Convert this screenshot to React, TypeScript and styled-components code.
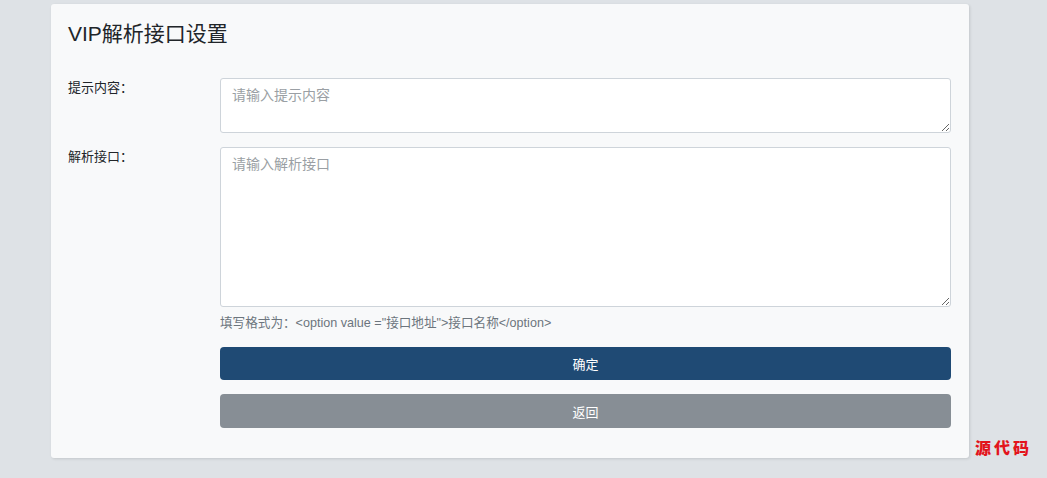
import React from "react";
import styled, { createGlobalStyle } from "styled-components";

const Global = createGlobalStyle`
  html, body { margin: 0; padding: 0; }
  body {
    background: #dee2e6;
    font-family: "Liberation Sans", "Noto Sans CJK SC", Arial, sans-serif;
    color: #212529;
    width: 1047px;
    height: 478px;
    overflow: hidden;
  }
`;

const Page = styled.div`
  position: relative;
  width: 1047px;
  height: 478px;
  padding-top: 4px;
  box-sizing: border-box;
`;

const Card = styled.div`
  margin-left: 51px;
  width: 918px;
  height: 454px;
  box-sizing: border-box;
  background: #f8f9fa;
  border-radius: 3px;
  box-shadow: 1px 1px 3px rgba(0, 0, 0, 0.12);
  padding: 15px 18px 30px 17px;
  display: flex;
  flex-direction: column;
`;

const Title = styled.h1`
  margin: 0 0 29px;
  font-size: 21px;
  line-height: 30px;
  font-weight: 400;
  color: #212529;
`;

const Row = styled.div<{ $gap?: number }>`
  display: grid;
  grid-template-columns: 152px 1fr;
  margin-bottom: ${(p) => p.$gap ?? 0}px;
`;

const Label = styled.label`
  font-size: 13px;
  line-height: 20px;
  color: #212529;
`;

const Field = styled.div`
  display: flex;
  flex-direction: column;
`;

const TextArea = styled.textarea<{ $h: number }>`
  display: block;
  box-sizing: border-box;
  width: 100%;
  height: ${(p) => p.$h}px;
  margin: 0;
  padding: 6px 11px;
  border: 1px solid #ced4da;
  border-radius: 3px;
  background: #fff;
  font-family: "Liberation Sans", "Noto Sans CJK SC", Arial, sans-serif;
  font-size: 14px;
  line-height: 20px;
  color: #495057;
  resize: vertical;
  outline: none;
  &::placeholder { color: #9a9fa4; }
`;

const Help = styled.div`
  margin-top: 6px;
  font-size: 12.6px;
  line-height: 20px;
  color: #6c757d;
`;

const Button = styled.button<{ $bg: string; $h: number; $mt: number }>`
  display: block;
  width: 100%;
  height: ${(p) => p.$h}px;
  margin-top: ${(p) => p.$mt}px;
  border: none;
  border-radius: 4px;
  background: ${(p) => p.$bg};
  color: #fff;
  font-family: "Liberation Sans", "Noto Sans CJK SC", Arial, sans-serif;
  font-size: 13px;
  cursor: pointer;
`;

const Watermark = styled.div`
  position: absolute;
  left: 975px;
  top: 435px;
  font-family: "Noto Sans CJK SC", serif;
  font-weight: 900;
  font-size: 16px;
  letter-spacing: 3px;
  color: #e3141c;
`;

export default function App() {
  return (
    <Page>
      <Global />
      <Card>
        <Title>VIP解析接口设置</Title>
        <Row $gap={14}>
          <Label>提示内容：</Label>
          <Field>
            <TextArea $h={55} placeholder="请输入提示内容" />
          </Field>
        </Row>
        <Row>
          <Label>解析接口：</Label>
          <Field>
            <TextArea $h={160} placeholder="请输入解析接口" />
            <Help>填写格式为：&lt;option value ="接口地址"&gt;接口名称&lt;/option&gt;</Help>
            <Button $bg="#1f4a74" $h={33} $mt={14}>确定</Button>
            <Button $bg="#878e95" $h={34} $mt={14}>返回</Button>
          </Field>
        </Row>
      </Card>
      <Watermark>源代码</Watermark>
    </Page>
  );
}
